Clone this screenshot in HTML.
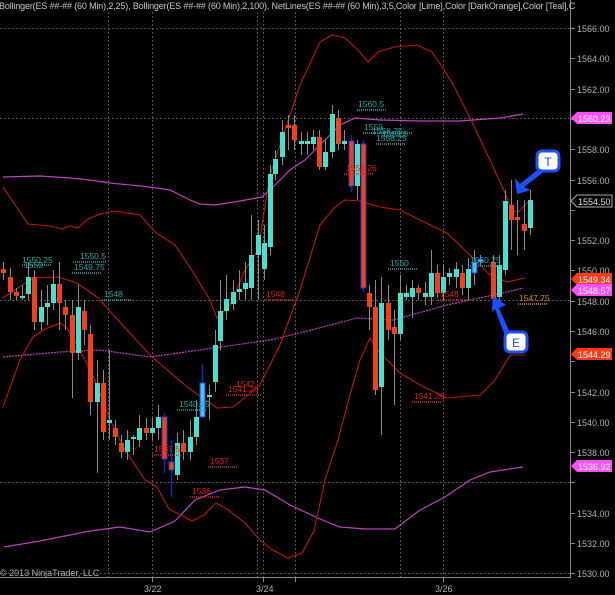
<!DOCTYPE html>
<html><head><meta charset="utf-8"><style>
html,body{margin:0;padding:0;background:#000;width:615px;height:595px;overflow:hidden}
svg{display:block}
text{font-family:"Liberation Sans",sans-serif}
</style></head><body>
<svg width="615" height="595" viewBox="0 0 615 595" xmlns="http://www.w3.org/2000/svg">
<rect width="615" height="595" fill="#000"/>
<g stroke="#555" stroke-width="1" stroke-dasharray="2,2" fill="none">
<line x1="0" y1="28.5" x2="570" y2="28.5"/>
<line x1="0" y1="118.5" x2="570" y2="118.5"/>
<line x1="0" y1="300.5" x2="570" y2="300.5"/>
<line x1="0" y1="482.5" x2="570" y2="482.5"/>
<line x1="0" y1="573.5" x2="570" y2="573.5"/>
<line x1="108.5" y1="12" x2="108.5" y2="577"/>
<line x1="152.5" y1="12" x2="152.5" y2="577"/>
<line x1="257.5" y1="12" x2="257.5" y2="577"/>
<line x1="263.5" y1="12" x2="263.5" y2="577"/>
<line x1="295.5" y1="12" x2="295.5" y2="577"/>
<line x1="400.5" y1="12" x2="400.5" y2="577"/>
<line x1="443.5" y1="12" x2="443.5" y2="577"/>
</g>
<g stroke="#888" stroke-width="1">
<line x1="570.5" y1="0" x2="570.5" y2="578"/>
<line x1="0" y1="577.5" x2="571" y2="577.5"/>
<line x1="152.5" y1="577" x2="152.5" y2="582"/>
<line x1="263.5" y1="577" x2="263.5" y2="582"/>
<line x1="295.5" y1="577" x2="295.5" y2="582"/>
<line x1="443.5" y1="577" x2="443.5" y2="582"/>
</g>
<g stroke="#888" stroke-width="1">
<line x1="570" y1="28.5" x2="575" y2="28.5"/><line x1="570" y1="58.5" x2="575" y2="58.5"/><line x1="570" y1="89.5" x2="575" y2="89.5"/><line x1="570" y1="119.5" x2="575" y2="119.5"/><line x1="570" y1="149.5" x2="575" y2="149.5"/><line x1="570" y1="180.5" x2="575" y2="180.5"/><line x1="570" y1="210.5" x2="575" y2="210.5"/><line x1="570" y1="240.5" x2="575" y2="240.5"/><line x1="570" y1="270.5" x2="575" y2="270.5"/><line x1="570" y1="301.5" x2="575" y2="301.5"/><line x1="570" y1="331.5" x2="575" y2="331.5"/><line x1="570" y1="361.5" x2="575" y2="361.5"/><line x1="570" y1="392.5" x2="575" y2="392.5"/><line x1="570" y1="422.5" x2="575" y2="422.5"/><line x1="570" y1="452.5" x2="575" y2="452.5"/><line x1="570" y1="482.5" x2="575" y2="482.5"/><line x1="570" y1="513.5" x2="575" y2="513.5"/><line x1="570" y1="543.5" x2="575" y2="543.5"/><line x1="570" y1="573.5" x2="575" y2="573.5"/>
</g>
<g fill="#b0b0b0" font-size="9">
<text x="577" y="32">1566.00</text><text x="577" y="62">1564.00</text><text x="577" y="93">1562.00</text>
<text x="577" y="153">1558.00</text><text x="577" y="184">1556.00</text>
<text x="577" y="244">1552.00</text><text x="577" y="274">1550.00</text>
<text x="577" y="305">1548.00</text><text x="577" y="335">1546.00</text>
<text x="577" y="396">1542.00</text><text x="577" y="426">1540.00</text><text x="577" y="456">1538.00</text>
<text x="577" y="517">1534.00</text><text x="577" y="547">1532.00</text><text x="577" y="577">1530.00</text>
<text x="144" y="592">3/22</text><text x="256" y="592">3/24</text><text x="435" y="592">3/26</text>
<text x="0" y="576">© 2013 NinjaTrader, LLC</text>
</g>
<text x="-1" y="9" font-size="9" letter-spacing="-0.15" fill="#c8c8c8">Bollinger(ES ##-## (60 Min),2,25), Bollinger(ES ##-## (60 Min),2,100), NetLines(ES ##-## (60 Min),3,5,Color [Lime],Color [DarkOrange],Color [Teal],C</text>

<g fill="none" stroke="#c040c0" stroke-width="1.2">
<polyline points="3,177 40,176 70,178 90,180 110,183 150,187 170,190 190,200 200,204 215,205 240,201 262,197 275,185 290,170 305,160 320,145 340,125 355,118 380,120 420,121 460,121 500,118 523,114"/>
<polyline points="4,547 40,541 90,531 120,527 150,532 175,521 195,500 220,490 245,487 265,490 290,505 320,519 340,527 365,529 395,529 420,510 445,497 470,480 490,472 523,467"/>
<polyline stroke-dasharray="2,1" points="3,357 60,352 100,350 150,357 200,350 270,340 300,333 357,318 393,320 447,305 507,292 523,288"/>
</g>
<g fill="none" stroke="#c01808" stroke-width="1.1">
<polyline points="3,187 28,224 50,226 62,229 70,226 78,228 88,219 100,214 115,211 140,215 155,232 175,245 195,275 210,300 217,318 230,305 245,270 258,250 270,175 285,130 300,85 320,42 332,35 345,38 358,50 368,62 378,52 394,47 417,45 432,52 443,68 455,88 470,118 490,160 505,193 512,210 518,212 530,200"/>
<polyline points="3,298 33,278 58,277 77,283 97,297 150,355 187,387 217,408 233,407 260,385 280,345 300,290 320,225 335,207 345,200 360,201 380,207 400,210 420,220 447,233 470,255 490,275 507,282 525,278"/>
<polyline points="3,407 20,360 33,337 43,330 60,323 67,328 80,350 95,380 110,420 125,450 145,480 157,487 169,509 192,521 204,515 216,503 227,509 245,523 259,539 271,549 288,558 302,553 314,531 325,480 338,440 350,395 360,360 370,338 380,353 400,373 420,385 447,398 480,395 495,380 510,355 525,355"/>
</g>

<g>
<g stroke="#8a8a8a" stroke-width="1">
<line x1="3.5" y1="262" x2="3.5" y2="280"/><line x1="10.5" y1="268" x2="10.5" y2="300"/><line x1="16.5" y1="288" x2="16.5" y2="300"/><line x1="22.5" y1="285" x2="22.5" y2="300"/><line x1="28.5" y1="263" x2="28.5" y2="300"/><line x1="34.5" y1="270" x2="34.5" y2="330"/><line x1="41.5" y1="290" x2="41.5" y2="330"/><line x1="47.5" y1="285" x2="47.5" y2="325"/><line x1="53.5" y1="270" x2="53.5" y2="310"/><line x1="59.5" y1="262" x2="59.5" y2="330"/><line x1="65.5" y1="300" x2="65.5" y2="330"/><line x1="72.5" y1="300" x2="72.5" y2="398"/><line x1="78.5" y1="285" x2="78.5" y2="360"/><line x1="84.5" y1="300" x2="84.5" y2="345"/><line x1="90.5" y1="325" x2="90.5" y2="415"/><line x1="97.5" y1="360" x2="97.5" y2="473"/><line x1="103.5" y1="370" x2="103.5" y2="440"/><line x1="109.5" y1="350" x2="109.5" y2="440"/><line x1="115.5" y1="420" x2="115.5" y2="445"/><line x1="121.5" y1="435" x2="121.5" y2="458"/><line x1="127.5" y1="430" x2="127.5" y2="460"/><line x1="133.5" y1="435" x2="133.5" y2="455"/><line x1="139.5" y1="415" x2="139.5" y2="447"/><line x1="146.5" y1="418" x2="146.5" y2="440"/><line x1="152.5" y1="418" x2="152.5" y2="440"/><line x1="158.5" y1="405" x2="158.5" y2="440"/><line x1="177.5" y1="433" x2="177.5" y2="480"/><line x1="183.5" y1="430" x2="183.5" y2="460"/><line x1="190.5" y1="420" x2="190.5" y2="460"/><line x1="196.5" y1="400" x2="196.5" y2="445"/><line x1="209.5" y1="385" x2="209.5" y2="420"/><line x1="215.5" y1="330" x2="215.5" y2="392"/><line x1="220.5" y1="280" x2="220.5" y2="350"/><line x1="226.5" y1="275" x2="226.5" y2="320"/><line x1="233.5" y1="280" x2="233.5" y2="310"/><line x1="239.5" y1="270" x2="239.5" y2="300"/><line x1="245.5" y1="262" x2="245.5" y2="300"/><line x1="251.5" y1="215" x2="251.5" y2="300"/><line x1="258.5" y1="220" x2="258.5" y2="300"/><line x1="264.5" y1="225" x2="264.5" y2="280"/><line x1="270.5" y1="165" x2="270.5" y2="255"/><line x1="275.5" y1="150" x2="275.5" y2="180"/><line x1="282.5" y1="120" x2="282.5" y2="165"/><line x1="288.5" y1="115" x2="288.5" y2="150"/><line x1="294.5" y1="115" x2="294.5" y2="150"/><line x1="301.5" y1="132" x2="301.5" y2="155"/><line x1="307.5" y1="132" x2="307.5" y2="155"/><line x1="313.5" y1="130" x2="313.5" y2="150"/><line x1="319.5" y1="130" x2="319.5" y2="170"/><line x1="325.5" y1="140" x2="325.5" y2="170"/><line x1="332.5" y1="105" x2="332.5" y2="158"/><line x1="338.5" y1="110" x2="338.5" y2="150"/><line x1="344.5" y1="130" x2="344.5" y2="150"/><line x1="357.5" y1="140" x2="357.5" y2="200"/><line x1="369.5" y1="285" x2="369.5" y2="330"/><line x1="375.5" y1="280" x2="375.5" y2="395"/><line x1="381.5" y1="277" x2="381.5" y2="435"/><line x1="388.5" y1="285" x2="388.5" y2="340"/><line x1="394.5" y1="310" x2="394.5" y2="405"/><line x1="400.5" y1="275" x2="400.5" y2="340"/><line x1="406.5" y1="285" x2="406.5" y2="300"/><line x1="412.5" y1="280" x2="412.5" y2="318"/><line x1="418.5" y1="285" x2="418.5" y2="300"/><line x1="425.5" y1="282" x2="425.5" y2="305"/><line x1="431.5" y1="250" x2="431.5" y2="305"/><line x1="437.5" y1="265" x2="437.5" y2="298"/><line x1="443.5" y1="265" x2="443.5" y2="300"/><line x1="449.5" y1="268" x2="449.5" y2="285"/><line x1="456.5" y1="262" x2="456.5" y2="288"/><line x1="462.5" y1="265" x2="462.5" y2="295"/><line x1="468.5" y1="258" x2="468.5" y2="300"/><line x1="474.5" y1="250" x2="474.5" y2="285"/><line x1="480.5" y1="255" x2="480.5" y2="265"/><line x1="493.5" y1="255" x2="493.5" y2="302"/><line x1="499.5" y1="255" x2="499.5" y2="305"/><line x1="505.5" y1="190" x2="505.5" y2="275"/><line x1="511.5" y1="180" x2="511.5" y2="250"/><line x1="517.5" y1="200" x2="517.5" y2="255"/><line x1="524.5" y1="200" x2="524.5" y2="250"/><line x1="530.5" y1="190" x2="530.5" y2="235"/>
</g>
<g stroke="#1a2aa0" stroke-width="1.5">
<line x1="164.5" y1="413" x2="164.5" y2="473"/><line x1="171.5" y1="440" x2="171.5" y2="497"/><line x1="202.5" y1="364" x2="202.5" y2="417"/><line x1="351.5" y1="135" x2="351.5" y2="192"/><line x1="363.5" y1="140" x2="363.5" y2="292"/>
</g>
<g fill="#f2401c">
<rect x="1" y="269" width="5" height="4"/><rect x="8" y="277" width="5" height="15"/><rect x="14" y="292" width="5" height="4"/><rect x="32" y="277" width="5" height="45"/><rect x="57" y="284" width="5" height="19"/><rect x="63" y="307" width="5" height="8"/><rect x="70" y="315" width="5" height="38"/><rect x="82" y="311" width="5" height="19"/><rect x="88" y="334" width="5" height="68"/><rect x="101" y="383" width="5" height="49"/><rect x="113" y="428" width="5" height="9"/><rect x="119" y="443" width="5" height="9"/><rect x="144" y="428" width="5" height="5"/><rect x="181" y="443" width="5" height="9"/><rect x="286" y="125" width="5" height="3"/><rect x="292" y="125" width="5" height="15"/><rect x="317" y="137" width="5" height="30"/><rect x="336" y="118" width="5" height="26"/><rect x="367" y="293" width="5" height="14"/><rect x="373" y="307" width="5" height="83"/><rect x="386" y="303" width="5" height="27"/><rect x="392" y="327" width="5" height="7"/><rect x="416" y="288" width="5" height="5"/><rect x="435" y="273" width="5" height="20"/><rect x="460" y="273" width="5" height="15"/><rect x="491" y="262" width="5" height="37"/><rect x="509" y="205" width="5" height="15"/><rect x="515" y="217" width="5" height="3"/><rect x="522" y="224" width="5" height="7"/>
</g>
<g fill="#f2401c" stroke="#2040d0" stroke-width="1">
<rect x="162" y="417" width="5" height="42"/><rect x="169" y="462" width="5" height="8"/><rect x="349" y="141" width="5" height="45"/><rect x="361" y="144" width="5" height="144"/>
</g>
<g fill="#48e0cc">
<rect x="20" y="296" width="5" height="2"/><rect x="26" y="277" width="5" height="17"/><rect x="39" y="307" width="5" height="15"/><rect x="45" y="303" width="5" height="4"/><rect x="51" y="284" width="5" height="19"/><rect x="76" y="307" width="5" height="46"/><rect x="95" y="383" width="5" height="19"/><rect x="107" y="420" width="5" height="3"/><rect x="125" y="440" width="5" height="12"/><rect x="131" y="437" width="5" height="2"/><rect x="137" y="428" width="5" height="12"/><rect x="150" y="428" width="5" height="5"/><rect x="156" y="417" width="5" height="11"/><rect x="175" y="443" width="5" height="32"/><rect x="188" y="437" width="5" height="15"/><rect x="194" y="417" width="5" height="20"/><rect x="207" y="395" width="5" height="2"/><rect x="213" y="345" width="5" height="37"/><rect x="218" y="311" width="5" height="30"/><rect x="224" y="299" width="5" height="12"/><rect x="231" y="292" width="5" height="12"/><rect x="237" y="289" width="5" height="3"/><rect x="243" y="283" width="5" height="6"/><rect x="249" y="255" width="5" height="33"/><rect x="256" y="235" width="5" height="20"/><rect x="262" y="243" width="5" height="26"/><rect x="268" y="174" width="5" height="73"/><rect x="273" y="159" width="5" height="15"/><rect x="280" y="132" width="5" height="25"/><rect x="299" y="141" width="5" height="3"/><rect x="305" y="141" width="5" height="3"/><rect x="311" y="137" width="5" height="7"/><rect x="323" y="152" width="5" height="15"/><rect x="330" y="114" width="5" height="38"/><rect x="342" y="141" width="5" height="3"/><rect x="355" y="144" width="5" height="42"/><rect x="379" y="303" width="5" height="84"/><rect x="398" y="293" width="5" height="41"/><rect x="404" y="293" width="5" height="4"/><rect x="410" y="288" width="5" height="9"/><rect x="423" y="293" width="5" height="4"/><rect x="429" y="273" width="5" height="24"/><rect x="441" y="277" width="5" height="16"/><rect x="447" y="273" width="5" height="4"/><rect x="454" y="269" width="5" height="8"/><rect x="466" y="269" width="5" height="19"/><rect x="497" y="265" width="5" height="32"/><rect x="503" y="201" width="5" height="69"/><rect x="528" y="200" width="5" height="28"/>
</g>
<g fill="#40c8ff" stroke="#2040d0" stroke-width="1">
<rect x="200" y="383" width="5" height="34"/><rect x="472" y="262" width="5" height="11"/><rect x="478" y="259" width="5" height="3"/>
</g>
</g>

<g font-size="8.5">
<g fill="#20a8a8">
<text x="22" y="263">1550.25</text><text x="24" y="268">1550</text><text x="80" y="259">1550.5</text><text x="74" y="270">1549.75</text><text x="104" y="297">1548</text><text x="179" y="407">1540.25</text>
<text x="358" y="107">1560.5</text><text x="364" y="130">1559</text><text x="372" y="134">1558.75</text><text x="382" y="137">1558.5</text><text x="376" y="141">1558.25</text><text x="390" y="266">1550</text><text x="470" y="263">1550.25</text>
</g>
<g fill="#e02010">
<text x="266" y="297">1548</text><text x="346" y="171">1554.26</text><text x="236" y="387">1542</text><text x="228" y="392">1541.26</text><text x="154" y="452">1537.5</text><text x="210" y="464">1537</text><text x="192" y="494">1536</text><text x="440" y="297">1548</text><text x="414" y="399">1541.26</text>
</g>
<text x="519" y="301" fill="#e08a00">1547.75</text>
</g>
<g stroke-dasharray="1,1" stroke-width="1.5" fill="none">
<g stroke="#20a8a8">
<line x1="22" y1="265" x2="52" y2="265"/><line x1="73" y1="262" x2="107" y2="262"/><line x1="72" y1="273" x2="102" y2="273"/><line x1="102" y1="300" x2="132" y2="300"/><line x1="177" y1="410" x2="207" y2="410"/><line x1="357" y1="110" x2="386" y2="110"/><line x1="363" y1="133" x2="412" y2="133"/><line x1="376" y1="144" x2="405" y2="144"/><line x1="388" y1="269" x2="418" y2="269"/><line x1="468" y1="266" x2="500" y2="266"/>
</g>
<g stroke="#e02010">
<line x1="264" y1="300" x2="294" y2="300"/><line x1="344" y1="174" x2="374" y2="174"/><line x1="226" y1="395" x2="262" y2="395"/><line x1="152" y1="455" x2="182" y2="455"/><line x1="208" y1="467" x2="238" y2="467"/><line x1="190" y1="497" x2="220" y2="497"/><line x1="438" y1="300" x2="468" y2="300"/><line x1="412" y1="402" x2="442" y2="402"/>
</g>
<line stroke="#e08a00" x1="518" y1="304" x2="548" y2="304"/>
</g>

<g font-size="9">
<path d="M571,118 L577,112 L612,112 L612,124 L577,124 Z" fill="#ff50ff"/><text x="578" y="122" fill="#fff">1560.23</text>
<path d="M571,201 L577,195 L612,195 L612,207 L577,207 Z" fill="#000" stroke="#aaa"/><text x="578" y="205" fill="#ddd">1554.50</text>
<path d="M571,279 L577,273 L612,273 L612,285 L577,285 Z" fill="#ff3a1a"/><text x="578" y="283" fill="#fff">1549.34</text>
<path d="M571,290 L577,284 L612,284 L612,296 L577,296 Z" fill="#ff50ff"/><text x="578" y="294" fill="#fff">1548.57</text>
<path d="M571,354 L577,348 L612,348 L612,360 L577,360 Z" fill="#ff3a1a"/><text x="578" y="358" fill="#fff">1544.29</text>
<path d="M571,466 L577,460 L612,460 L612,472 L577,472 Z" fill="#ff50ff"/><text x="578" y="470" fill="#fff">1536.92</text>
</g>

<g fill="#1a50ff">
<path d="M541,167 L520,184 L515,178 L517,194 L531,190 L524,187 L545,171 Z"/>
<path d="M510,333 L499,308 L506,305 L493,296 L492,312 L495,309 L505,336 Z"/>
</g>
<rect x="537" y="151" width="22" height="20" rx="5" fill="#fff" stroke="#1a50ff" stroke-width="3"/>
<text x="548" y="166" font-size="12" fill="#1a50ff" text-anchor="middle">T</text>
<rect x="505" y="332" width="22" height="20" rx="5" fill="#fff" stroke="#1a50ff" stroke-width="3"/>
<text x="516" y="347" font-size="12" fill="#1a50ff" text-anchor="middle">E</text>
</svg>
</body></html>
